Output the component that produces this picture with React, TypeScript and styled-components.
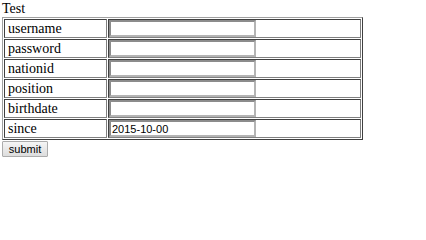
import styled, { createGlobalStyle } from 'styled-components';

const fields = [
  { name: 'username', value: '' },
  { name: 'password', value: '' },
  { name: 'nationid', value: '' },
  { name: 'position', value: '' },
  { name: 'birthdate', value: '' },
  { name: 'since', value: '2015-10-00' },
];

const GlobalStyle = createGlobalStyle`
  html, body {
    margin: 0;
    padding: 0;
    background: #fff;
  }
  body {
    padding: 0 2px;
    font-family: "Liberation Serif", "Times New Roman", serif;
    font-size: 14px;
    color: #000;
  }
`;

const App: React.FC = () => {
  return (
    <>
      <GlobalStyle />
      <Title>Test</Title>
      <form onSubmit={(e) => e.preventDefault()}>
        <FormTable>
          <colgroup>
            <col style={{ width: 103 }} />
            <col style={{ width: 253 }} />
          </colgroup>
          <tbody>
            {fields.map((f) => (
              <tr key={f.name}>
                <LabelCell>{f.name}</LabelCell>
                <InputCell>
                  <TextInput type="text" name={f.name} defaultValue={f.value} />
                </InputCell>
              </tr>
            ))}
          </tbody>
        </FormTable>
        <SubmitButton type="submit">submit</SubmitButton>
      </form>
    </>
  );
};

export default App;

// Styled components

const Title = styled.div`
  height: 17px;
  line-height: 17px;
`;

const FormTable = styled.table`
  width: 361px;
  table-layout: fixed;
  border-collapse: separate;
  border-spacing: 1px;
  border: 1px solid;
  border-color: #a0a0a0 #404040 #404040 #a0a0a0;
`;

const Cell = styled.td`
  box-sizing: border-box;
  height: 19px;
  padding: 0;
  border: 1px solid;
  border-color: #404040 #808080 #808080 #404040;
  vertical-align: middle;
`;

const LabelCell = styled(Cell)`
  padding-left: 3px;
  line-height: 17px;
  white-space: nowrap;
`;

const InputCell = styled(Cell)``;

const TextInput = styled.input`
  display: block;
  box-sizing: border-box;
  width: 147px;
  height: 17px;
  margin: 0;
  padding: 0 1px;
  border: 2px solid;
  border-color: #8c8c8c #b4b4b4 #b4b4b4 #8c8c8c;
  font-family: "Liberation Sans", Arial, sans-serif;
  font-size: 11px;
  color: #000;
  background: #fff;
  outline: none;
`;

const SubmitButton = styled.button`
  display: block;
  box-sizing: border-box;
  width: 46px;
  height: 16px;
  margin: 1px 0 0;
  padding: 0;
  border: 1px solid #acacac;
  border-radius: 1px;
  background: linear-gradient(#f5f5f5, #dddddd);
  font-family: "Liberation Sans", Arial, sans-serif;
  font-size: 11px;
  line-height: 14px;
  color: #000;
  cursor: pointer;
`;
